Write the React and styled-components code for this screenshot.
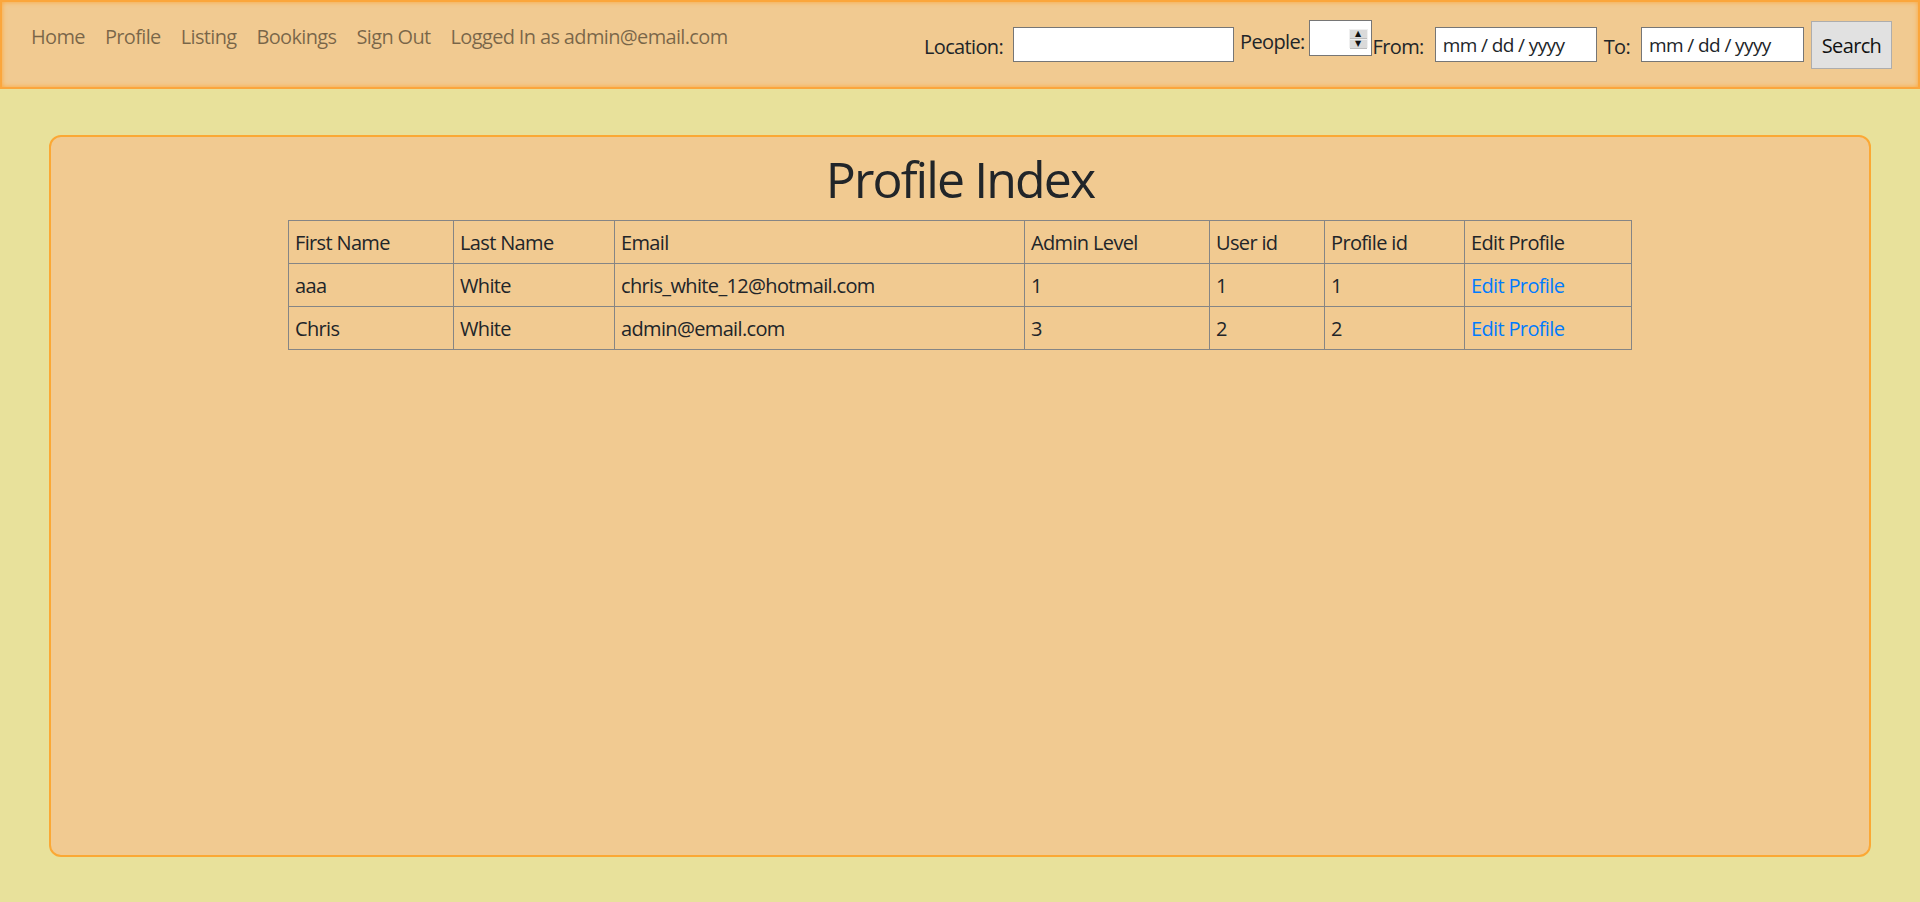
import React from "react";
import styled, { createGlobalStyle } from "styled-components";

const GlobalStyle = createGlobalStyle`
  html, body {
    margin: 0;
    padding: 0;
  }
  body {
    background: #e8e19b;
    font-family: "Open Sans", "Noto Sans", sans-serif;
    font-size: 20px;
    letter-spacing: -0.65px;
    color: #212529;
    min-height: 902px;
  }
`;

const NavBar = styled.nav`
  display: flex;
  justify-content: space-between;
  align-items: flex-start;
  box-sizing: border-box;
  height: 89px;
  padding: 20px 26px 0 19px;
  background: #f1ca91;
  border: 2px solid #fba63c;
  box-shadow: inset 0 0 5px #fba63c;
`;

const NavLinks = styled.ul`
  display: flex;
  margin: 0;
  padding: 0;
  list-style: none;
`;

const NavLink = styled.a`
  display: block;
  padding: 0 10px;
  line-height: 30px;
  color: rgba(0, 0, 0, 0.5);
  text-decoration: none;
`;

const SearchForm = styled.form`
  display: flex;
  align-items: flex-start;
`;

const Label = styled.label`
  margin-top: ${(p) => p.$top}px;
  margin-right: ${(p) => p.$gap}px;
  line-height: 30px;
  color: #212529;
`;

const TextInput = styled.input`
  box-sizing: border-box;
  width: ${(p) => p.$width}px;
  height: 35px;
  margin: 5px ${(p) => p.$gap}px 0 0;
  padding: 0 7px;
  border: 1px solid #767676;
  background: #fff;
  font-family: inherit;
  font-size: 19px;
  letter-spacing: -0.6px;
  color: #212529;
  &::placeholder {
    color: #212529;
    opacity: 1;
  }
`;

const NumberBox = styled.div`
  position: relative;
  box-sizing: border-box;
  width: 63px;
  height: 36px;
  margin: -2px 1px 0 0;
  border: 1px solid #767676;
  background: #fff;
`;

const NumberInput = styled.input`
  box-sizing: border-box;
  width: 100%;
  height: 100%;
  border: none;
  padding: 0 24px 0 6px;
  background: transparent;
  font-family: inherit;
  font-size: 18px;
  outline: none;
  -moz-appearance: textfield;
  &::-webkit-inner-spin-button,
  &::-webkit-outer-spin-button {
    -webkit-appearance: none;
    margin: 0;
  }
`;

const Spinner = styled.div`
  position: absolute;
  top: 8px;
  right: 3px;
  display: flex;
  flex-direction: column;
  gap: 1px;
  box-sizing: border-box;
  width: 19px;
  height: 19px;
  padding: 1px;
  background: #f0f0f0;
`;

const SpinButton = styled.span`
  flex: 1;
  display: flex;
  align-items: center;
  justify-content: center;
  background: #dadada;
  border-bottom: 1px solid #bdbdbd;
  font-family: "DejaVu Sans", sans-serif;
  font-size: 8px;
  letter-spacing: 0;
  line-height: 1;
  color: #111;
`;

const SearchButton = styled.button`
  box-sizing: border-box;
  width: 81px;
  height: 48px;
  margin-top: -1px;
  padding: 0;
  border: 1px solid #adadad;
  background: #e1e1e1;
  font-family: inherit;
  font-size: 20px;
  letter-spacing: -0.65px;
  color: #111;
`;

const Card = styled.main`
  box-sizing: border-box;
  height: 722px;
  margin: 46px 49px 45px;
  padding: 12px 16px;
  background: #f1ca91;
  border: 2px solid #fba834;
  border-radius: 12px;
`;

const Title = styled.h1`
  margin: 0 0 11px;
  font-size: 50px;
  line-height: 60px;
  font-weight: 400;
  letter-spacing: -1.9px;
  text-align: center;
  color: #212529;
`;

const Table = styled.table`
  width: 1343px;
  margin: 0 auto;
  border-collapse: collapse;
  table-layout: fixed;
`;

const Cell = styled.td`
  padding: 7px 6px 5px;
  border: 1px solid #858585;
  line-height: 30px;
  text-align: left;
  font-weight: 400;
  white-space: nowrap;
`;

const EditLink = styled.a`
  color: #007bff;
  text-decoration: none;
`;

const columns = [
  { label: "First Name", width: 165 },
  { label: "Last Name", width: 161 },
  { label: "Email", width: 410 },
  { label: "Admin Level", width: 185 },
  { label: "User id", width: 115 },
  { label: "Profile id", width: 140 },
  { label: "Edit Profile", width: 167 },
];

const profiles = [
  { first: "aaa", last: "White", email: "chris_white_12@hotmail.com", level: 1, user: 1, profile: 1 },
  { first: "Chris", last: "White", email: "admin@email.com", level: 3, user: 2, profile: 2 },
];

const links = ["Home", "Profile", "Listing", "Bookings", "Sign Out", "Logged In as admin@email.com"];

export default function App() {
  return (
    <>
      <GlobalStyle />
      <NavBar>
        <NavLinks>
          {links.map((l) => (
            <li key={l}>
              <NavLink href="#">{l}</NavLink>
            </li>
          ))}
        </NavLinks>
        <SearchForm onSubmit={(e) => e.preventDefault()}>
          <Label $top={10} $gap={10}>Location:</Label>
          <TextInput type="text" $width={221} $gap={6} />
          <Label $top={5} $gap={4}>People:</Label>
          <NumberBox>
            <NumberInput type="number" />
            <Spinner>
              <SpinButton>▲</SpinButton>
              <SpinButton>▼</SpinButton>
            </Spinner>
          </NumberBox>
          <Label $top={10} $gap={11}>From:</Label>
          <TextInput type="text" placeholder="mm / dd / yyyy" $width={162} $gap={7} />
          <Label $top={10} $gap={11}>To:</Label>
          <TextInput type="text" placeholder="mm / dd / yyyy" $width={163} $gap={7} />
          <SearchButton type="submit">Search</SearchButton>
        </SearchForm>
      </NavBar>
      <Card>
        <Title>Profile Index</Title>
        <Table>
          <colgroup>
            {columns.map((c) => (
              <col key={c.label} style={{ width: c.width }} />
            ))}
          </colgroup>
          <thead>
            <tr>
              {columns.map((c) => (
                <Cell as="th" key={c.label}>{c.label}</Cell>
              ))}
            </tr>
          </thead>
          <tbody>
            {profiles.map((p) => (
              <tr key={p.profile}>
                <Cell>{p.first}</Cell>
                <Cell>{p.last}</Cell>
                <Cell>{p.email}</Cell>
                <Cell>{p.level}</Cell>
                <Cell>{p.user}</Cell>
                <Cell>{p.profile}</Cell>
                <Cell>
                  <EditLink href="#">Edit Profile</EditLink>
                </Cell>
              </tr>
            ))}
          </tbody>
        </Table>
      </Card>
    </>
  );
}
